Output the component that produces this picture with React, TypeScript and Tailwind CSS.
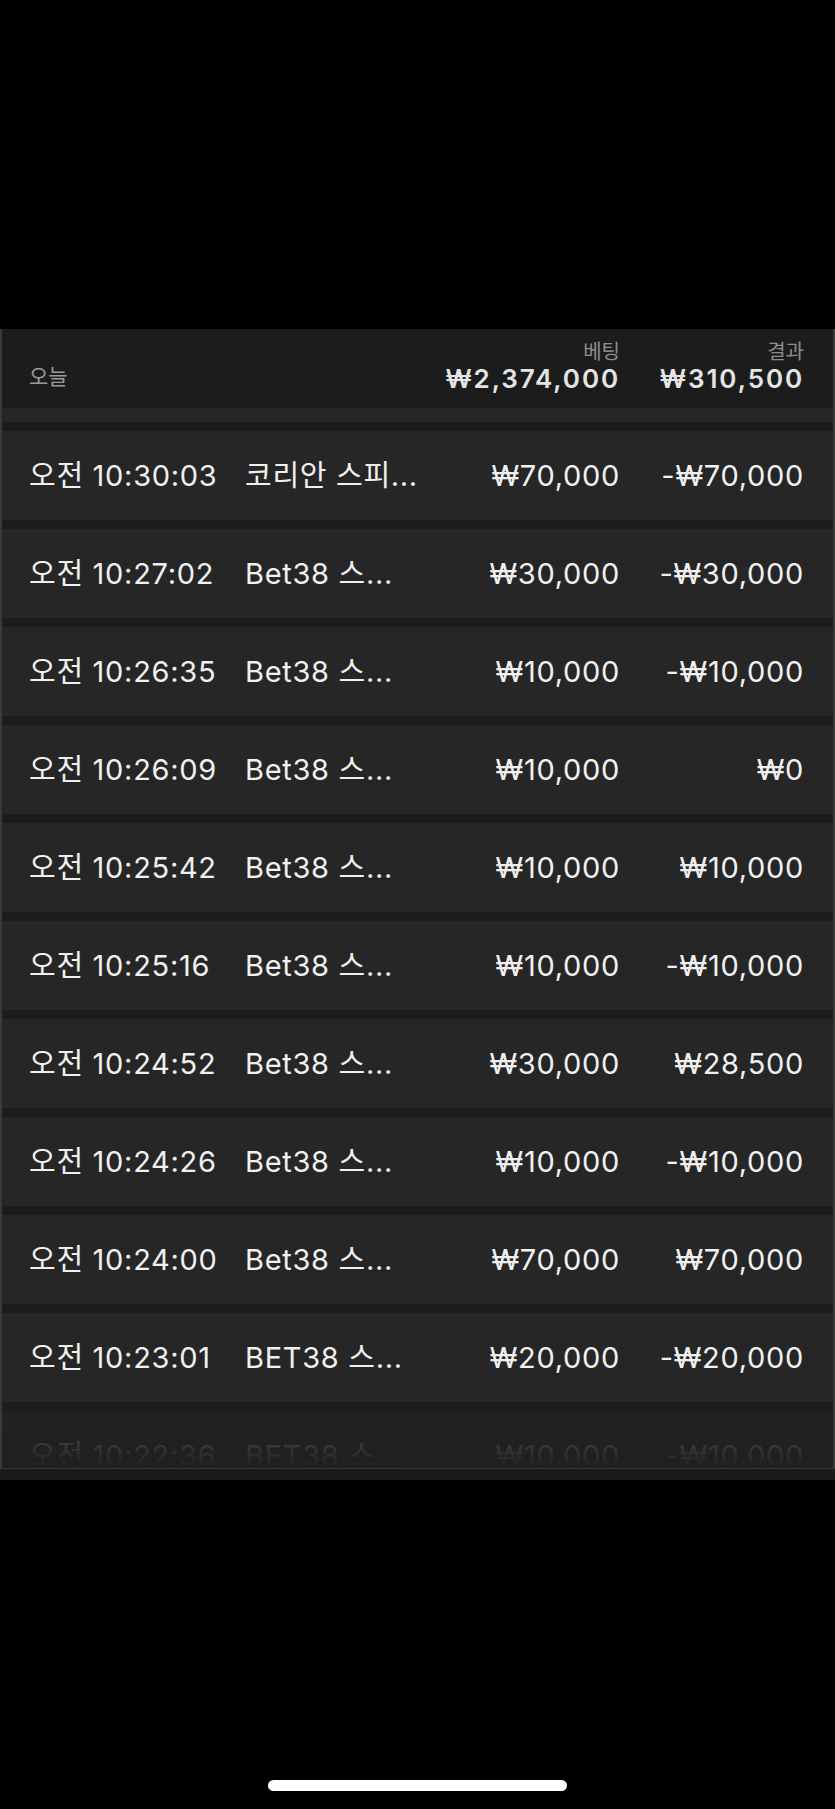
const rows = [
  { time: '오전 10:30:03', name: '코리안 스피...', bet: '₩70,000', result: '-₩70,000' },
  { time: '오전 10:27:02', name: 'Bet38 스...', bet: '₩30,000', result: '-₩30,000' },
  { time: '오전 10:26:35', name: 'Bet38 스...', bet: '₩10,000', result: '-₩10,000' },
  { time: '오전 10:26:09', name: 'Bet38 스...', bet: '₩10,000', result: '₩0' },
  { time: '오전 10:25:42', name: 'Bet38 스...', bet: '₩10,000', result: '₩10,000' },
  { time: '오전 10:25:16', name: 'Bet38 스...', bet: '₩10,000', result: '-₩10,000' },
  { time: '오전 10:24:52', name: 'Bet38 스...', bet: '₩30,000', result: '₩28,500' },
  { time: '오전 10:24:26', name: 'Bet38 스...', bet: '₩10,000', result: '-₩10,000' },
  { time: '오전 10:24:00', name: 'Bet38 스...', bet: '₩70,000', result: '₩70,000' },
  { time: '오전 10:23:01', name: 'BET38 스...', bet: '₩20,000', result: '-₩20,000' },
]

const font = "font-['Inter','Noto_Sans_CJK_KR',sans-serif]"

function Row({ time, name, bet, result }: { time: string; name: string; bet: string; result: string }) {
  return (
    <div className="h-[89px] bg-[#262626] flex items-center pl-[27px] pr-[29px] text-[29px] text-[#f0f0f0] tracking-[0.7px]">
      <span className="w-[216px] shrink-0">{time}</span>
      <span className="flex-1">{name}</span>
      <span className="text-right">{bet}</span>
      <span className="w-[184px] text-right">{result}</span>
    </div>
  )
}

export default function App() {
  const last = { time: '오전 10:22:36', name: 'BET38 스...', bet: '₩10,000', result: '-₩10,000' }
  return (
    <div className={`w-full h-[1809px] bg-black flex flex-col ${font}`}>
      <div className="h-[329px] shrink-0" />

      {/* Panel */}
      <div className="border-x-2 border-[#3a3a3a] bg-[#1c1c1c] flex flex-col">
        {/* Summary header */}
        <div className="h-[79px] flex items-end pl-[27px] pr-[29px] pb-[14px]">
          <span className="flex-1 text-[21px] text-[#9a9a9a] mb-[2px]">오늘</span>
          <div className="flex flex-col items-end">
            <span className="text-[20px] leading-[24px] text-[#8e8e8e]">베팅</span>
            <span className="text-[26px] leading-[30px] font-semibold text-[#e4e4e4] tracking-[1.9px]">₩2,374,000</span>
          </div>
          <div className="w-[184px] flex flex-col items-end">
            <span className="text-[20px] leading-[24px] text-[#8e8e8e]">결과</span>
            <span className="text-[26px] leading-[30px] font-semibold text-[#e4e4e4] tracking-[1.9px]">₩310,500</span>
          </div>
        </div>
        <div className="h-[14px] bg-[#262626]" />
        <div className="h-[9px]" />

        <div className="flex flex-col gap-[9px]">
          {rows.map((r, i) => (
            <Row key={i} {...r} />
          ))}
        </div>

        {/* Partially visible, fading row */}
        <div className="h-[66px] overflow-hidden pt-[9px]">
          <div className="relative">
            <div className="h-[89px] bg-[#212121] flex items-center pl-[27px] pr-[29px] text-[29px] text-[#4a4a4a] tracking-[0.7px]">
              <span className="w-[216px] shrink-0">{last.time}</span>
              <span className="flex-1">{last.name}</span>
              <span className="text-right">{last.bet}</span>
              <span className="w-[184px] text-right">{last.result}</span>
            </div>
            <div className="absolute inset-x-0 top-0 h-[57px] bg-gradient-to-b from-transparent via-[#202020]/30 to-[#202020]" />
          </div>
        </div>
      </div>
      <div className="h-px bg-[#3a3a3a]" />
      <div className="h-[11px] bg-[#1a1a1a]" />

      <div className="flex-1" />
      {/* Home indicator */}
      <div className="flex justify-center pb-[18px]">
        <div className="w-[299px] h-[11px] rounded-full bg-white" />
      </div>
    </div>
  )
}
